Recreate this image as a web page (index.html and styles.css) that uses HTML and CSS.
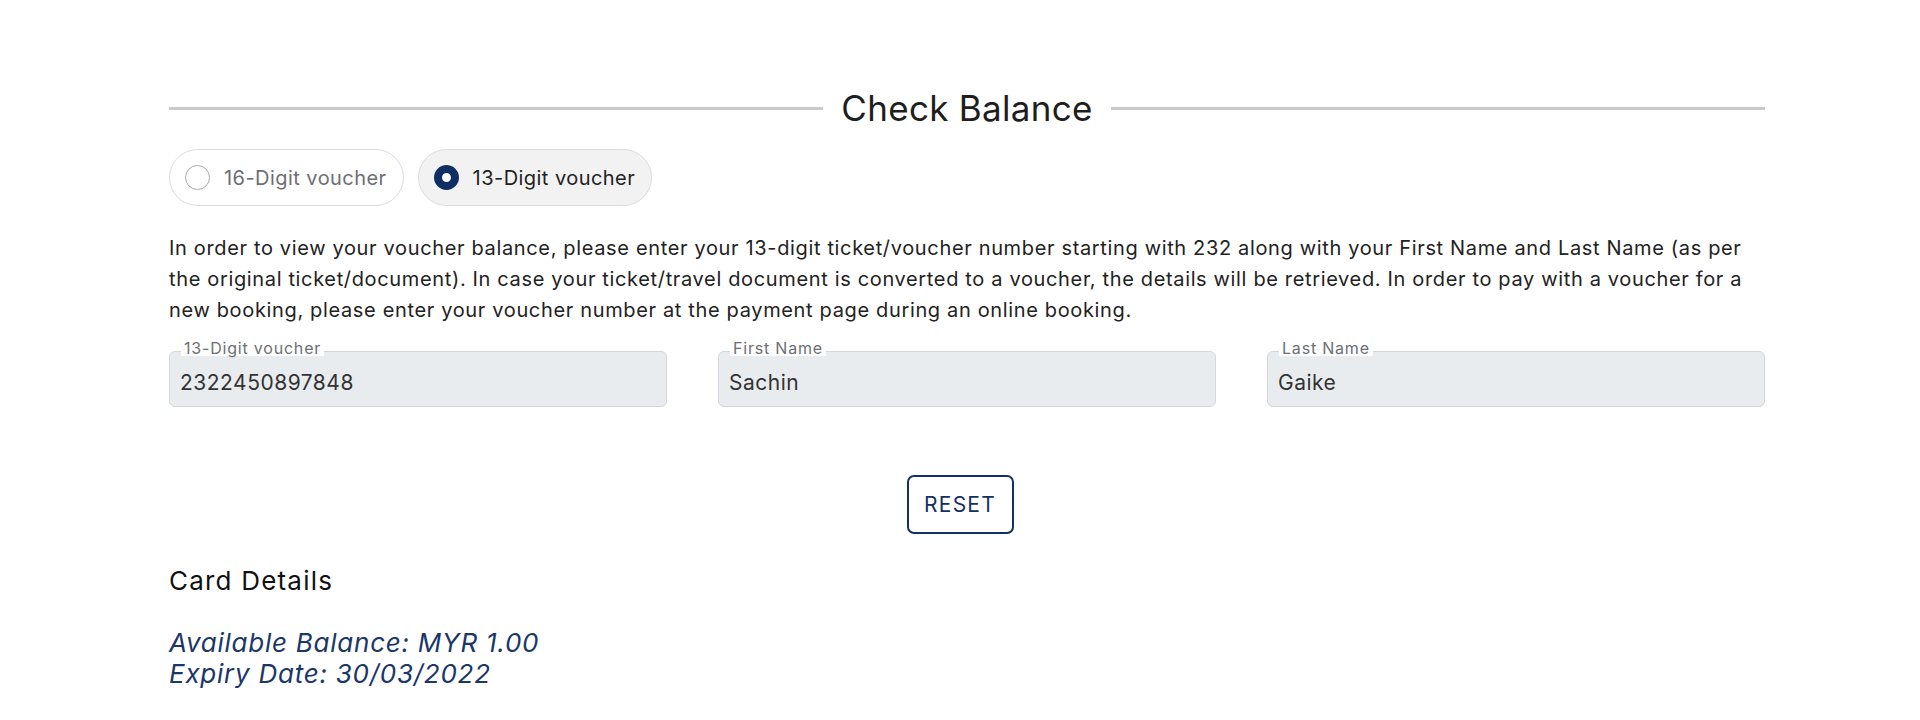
FILE: index.html
```html
<!DOCTYPE html>
<html lang="en">
<head>
    <meta charset="UTF-8">
    <meta name="viewport" content="width=device-width, initial-scale=1.0">
    <title>Check Balance</title>
    <link rel="stylesheet" href="styles.css">
</head>
<body>
    <div class="page">
        <div class="title-row">
            <span class="title-line"></span>
            <h1>Check Balance</h1>
            <span class="title-line"></span>
        </div>

        <div class="voucher-types">
            <label class="pill">
                <span class="radio"></span>
                <span class="pill-text">16-Digit voucher</span>
            </label>
            <label class="pill selected">
                <span class="radio"></span>
                <span class="pill-text">13-Digit voucher</span>
            </label>
        </div>

        <p class="info">In order to view your voucher balance, please enter your 13-digit ticket/voucher number starting with 232 along with your First Name and Last Name (as per the original ticket/document). In case your ticket/travel document is converted to a voucher, the details will be retrieved. In order to pay with a voucher for a new booking, please enter your voucher number at the payment page during an online booking.</p>

        <form class="fields">
            <div class="field">
                <label>13-Digit voucher</label>
                <input type="text" value="2322450897848">
            </div>
            <div class="field">
                <label>First Name</label>
                <input type="text" value="Sachin">
            </div>
            <div class="field">
                <label>Last Name</label>
                <input type="text" value="Gaike">
            </div>
        </form>

        <div class="actions">
            <button type="button" class="reset-btn">RESET</button>
        </div>

        <h2>Card Details</h2>
        <div class="balance">
            <div>Available Balance: MYR 1.00</div>
            <div>Expiry Date: 30/03/2022</div>
        </div>
    </div>
</body>
</html>
```

FILE: styles.css
```css
body {
    margin: 0;
    padding: 0;
    font-family: Inter, "Open Sans", sans-serif;
    color: #222;
    background: #fff;
}

.page {
    width: 1596px;
    margin-left: 169px;
    padding-top: 88px;
}

.title-row {
    display: flex;
    align-items: center;
    gap: 18px;
}

.title-line {
    flex: 1;
    height: 3px;
    background: #cacaca;
}

h1 {
    margin: 0;
    font-size: 35px;
    line-height: 40px;
    font-weight: 400;
    letter-spacing: 0.3px;
    color: #1e1e1e;
}

.voucher-types {
    display: flex;
    gap: 14px;
    margin-top: 21px;
}

.pill {
    display: flex;
    align-items: center;
    gap: 14px;
    height: 57px;
    box-sizing: border-box;
    padding: 0 16px 0 15px;
    border: 1.5px solid #dcdcdc;
    border-radius: 30px;
    background: #fff;
}

.pill.selected {
    background: #f2f2f2;
}

.radio {
    width: 25px;
    height: 25px;
    box-sizing: border-box;
    border: 1.5px solid #a9a9a9;
    border-radius: 50%;
    background: #fff;
}

.pill.selected .radio {
    border: 8px solid #0f2f63;
}

.pill-text {
    font-size: 20px;
    letter-spacing: 0.45px;
    color: #6c6f73;
}

.pill.selected .pill-text {
    color: #222;
}

.info {
    margin: 27px 0 0;
    font-size: 20px;
    line-height: 31px;
    letter-spacing: 0.65px;
    color: #222;
}

.fields {
    display: grid;
    grid-template-columns: 1fr 1fr 1fr;
    column-gap: 51px;
    margin-top: 25px;
}

.field {
    position: relative;
}

.field label {
    position: absolute;
    top: -11px;
    left: 12px;
    padding: 0 3px;
    font-size: 16px;
    line-height: 16px;
    letter-spacing: 0.8px;
    color: #6c6f73;
    background: #fff;
}

.field input {
    width: 100%;
    height: 56px;
    box-sizing: border-box;
    padding: 6px 10px 0;
    font-family: inherit;
    font-size: 21px;
    letter-spacing: 0.5px;
    color: #333;
    background: #e9ecef;
    border: 1px solid #d3d6da;
    border-radius: 6px;
}

.actions {
    display: flex;
    justify-content: center;
    padding-right: 14px;
    margin-top: 68px;
}

.reset-btn {
    width: 107px;
    height: 59px;
    font-family: inherit;
    font-size: 21px;
    letter-spacing: 1.2px;
    color: #13305f;
    background: #fff;
    border: 2px solid #13305f;
    border-radius: 7px;
}

h2 {
    margin: 32px 0 0;
    font-size: 26px;
    line-height: 30px;
    font-weight: 400;
    letter-spacing: 1.2px;
    color: #111;
}

.balance {
    margin-top: 31px;
    font-size: 26px;
    line-height: 31px;
    font-style: italic;
    letter-spacing: 0.75px;
    color: #1b3767;
}
```
